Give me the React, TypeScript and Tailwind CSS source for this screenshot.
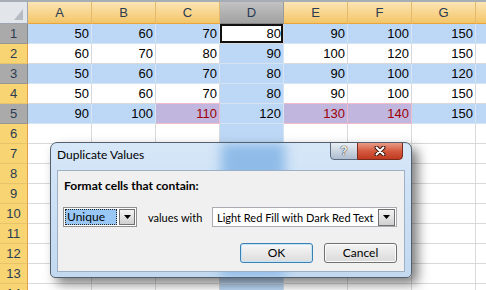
const COLS = ['A', 'B', 'C', 'D', 'E', 'F', 'G', 'H']

const DATA: number[][] = [
  [50, 60, 70, 80, 90, 100, 150],
  [60, 70, 80, 90, 100, 120, 150],
  [50, 60, 70, 80, 90, 100, 120],
  [50, 60, 70, 80, 90, 100, 150],
  [90, 100, 110, 120, 130, 140, 150],
]

const SELECTED_ROWS = [1, 3, 5]
const UNIQUE_CELLS = ['C5', 'E5', 'F5']

type Kind = 'plain' | 'sel' | 'active' | 'dup'

function cellKind(row: number, col: string): Kind {
  if (row === 1 && col === 'D') return 'active'
  if (UNIQUE_CELLS.includes(col + row)) return 'dup'
  if (col === 'D' || SELECTED_ROWS.includes(row)) return 'sel'
  return 'plain'
}

const kindClass: Record<Kind, string> = {
  plain: 'bg-white border-[#d9d9d9]',
  sel: 'bg-[#bcd8f6] border-[#d6e3f1]',
  active: 'bg-white border-[#d9d9d9] shadow-[inset_0_0_0_2px_#111]',
  dup: 'bg-[#c0b6de] border-[#f0bccb] text-[#9c0006] shadow-[0_-1px_0_#f0bccb]',
}

function HeaderRow() {
  return (
    <div className="flex h-[22px]">
      <div className="flex w-[28px] shrink-0 items-end justify-end border-r border-b border-[#9ea7b1] bg-[#e2e5e9] pr-[4px] pb-[3px]">
        <svg width="9" height="11" viewBox="0 0 9 11">
          <polygon points="9,0 9,11 0,11" fill="#b6bcc4" />
        </svg>
      </div>
      {COLS.map((c) => (
        <div
          key={c}
          className={
            'flex w-[64px] shrink-0 items-center justify-center border-r border-b text-[#2a3b52] ' +
            (c === 'D'
              ? 'border-r-[#9a9a9a] border-b-[#858585] bg-linear-to-b from-[#c2c2c2] to-[#a2a2a2]'
              : 'border-r-[#e3bb6a] border-b-[#e8a43d] bg-linear-to-b from-[#fbe5b4] to-[#f4c566]')
          }
        >
          {c}
        </div>
      ))}
    </div>
  )
}

function SheetRow({ row }: { row: number }) {
  const values = DATA[row - 1] ?? []
  const selected = SELECTED_ROWS.includes(row)
  return (
    <div className="flex h-[20px]">
      <div
        className={
          'flex w-[28px] shrink-0 items-center justify-center border-r border-b text-[#2a3b52] ' +
          (selected
            ? 'border-r-[#888] border-b-[#959595] bg-[#aaaaaa]'
            : 'border-r-[#e0a04a] border-b-[#e8c36c] bg-[#f8d472]')
        }
      >
        {row}
      </div>
      {COLS.map((c, i) => (
        <div
          key={c}
          className={'flex w-[64px] shrink-0 items-center justify-end border-r border-b pr-[2px] ' + kindClass[cellKind(row, c)]}
        >
          {values[i] ?? ''}
        </div>
      ))}
    </div>
  )
}

function DropButton({ className = '' }: { className?: string }) {
  return (
    <div
      className={
        'flex shrink-0 items-center justify-center border border-[#707070] bg-linear-to-b from-[#f4f4f4] to-[#d0d0d0] ' + className
      }
    >
      <svg width="7" height="4" viewBox="0 0 7 4">
        <polygon points="0,0 7,0 3.5,4" fill="#000" />
      </svg>
    </div>
  )
}

function DuplicateValuesDialog() {
  return (
    <div className="absolute left-[50px] top-[142px] h-[136px] w-[362px] overflow-hidden rounded-t-[7px] rounded-b-[5px] border border-[#52606f] bg-linear-to-b from-[#d6e7f8] to-[#c2d9f0] font-['Lato',sans-serif] text-[12px] text-black shadow-[6px_6px_12px_rgba(0,0,0,0.5)]">
      {/* column D showing through the glass */}
      <div className="absolute inset-y-0 left-[170px] w-[64px] bg-[#8fbbe8] blur-[6px]" />

      <div className="relative flex h-[27px] items-start justify-between">
        <span className="pl-[6px] pt-[4px] leading-[16px]">Duplicate Values</span>
        <div className="-mt-px mr-[8px] flex h-[18px]">
          <div className="flex w-[28px] items-center justify-center rounded-bl-[4px] border border-[#5b6c80] bg-linear-to-b from-[#e9eef4] to-[#aebdd0] font-['Liberation_Sans',sans-serif] text-[12px] font-bold text-[#f4f4f4] [text-shadow:0_0_1px_#222,0_0_1px_#222]">
            ?
          </div>
          <div className="-ml-px flex w-[46px] items-center justify-center rounded-br-[4px] border border-[#7b2b1d] bg-linear-to-b from-[#e99a87] via-[#d45a40] to-[#c0391f]">
            <svg width="12" height="10" viewBox="0 0 12 10">
              <path d="M2.5 1.5 L9.5 8.5 M9.5 1.5 L2.5 8.5" stroke="#3b1710" strokeWidth="4" strokeLinecap="round" />
              <path d="M2.5 1.5 L9.5 8.5 M9.5 1.5 L2.5 8.5" stroke="#fff" strokeWidth="2" strokeLinecap="round" />
            </svg>
          </div>
        </div>
      </div>

      <div className="relative mx-[6px] h-[102px] border border-[#9db0c6] bg-[#f0f0f0] px-[5px] pt-[7px]">
        <div className="pl-px font-bold leading-[16px]">Format cells that contain:</div>

        <div className="mt-[13px] flex h-[20px] items-center">
          <div className="flex h-[20px] w-[74px] items-center border border-[#8f9090] bg-white p-px">
            <div className="flex h-full flex-1 items-center border border-dotted border-[#222] bg-[#99c8f6] pl-px leading-none">
              Unique
            </div>
            <DropButton className="ml-[2px] h-full w-[16px]" />
          </div>
          <span className="ml-[11px] text-[11px] leading-none">values with</span>
          <div className="mr-[2px] ml-auto flex h-[20px] w-[185px] items-center border border-[#abadb3] bg-white p-px">
            <span className="flex-1 pl-[3px] text-[11px] leading-none whitespace-nowrap">
              Light Red Fill with Dark Red Text
            </span>
            <DropButton className="h-[17px] w-[17px]" />
          </div>
        </div>

        <div className="mt-[16px] flex justify-end gap-[11px] pr-[2px]">
          <button className="flex h-[20px] w-[73px] items-center justify-center rounded-[3px] border border-[#3c7fb1] bg-linear-to-b from-[#f7f7f7] to-[#dcdcdc] leading-none shadow-[inset_0_0_0_1px_#c3e5f8]">
            OK
          </button>
          <button className="flex h-[20px] w-[73px] items-center justify-center rounded-[3px] border border-[#707070] bg-linear-to-b from-[#f4f4f4] to-[#dadada] leading-none shadow-[inset_0_0_0_1px_#fbfbfb]">
            Cancel
          </button>
        </div>
      </div>
    </div>
  )
}

export default function App() {
  const rows = Array.from({ length: 14 }, (_, i) => i + 1)
  return (
    <div className="relative h-[290px] w-[486px] overflow-hidden bg-white font-['Liberation_Sans',Arial,sans-serif] text-[13px] text-black">
      <div className="h-[2px] bg-[#a6adb5]" />
      <HeaderRow />
      {rows.map((r) => (
        <SheetRow key={r} row={r} />
      ))}
      <DuplicateValuesDialog />
    </div>
  )
}
